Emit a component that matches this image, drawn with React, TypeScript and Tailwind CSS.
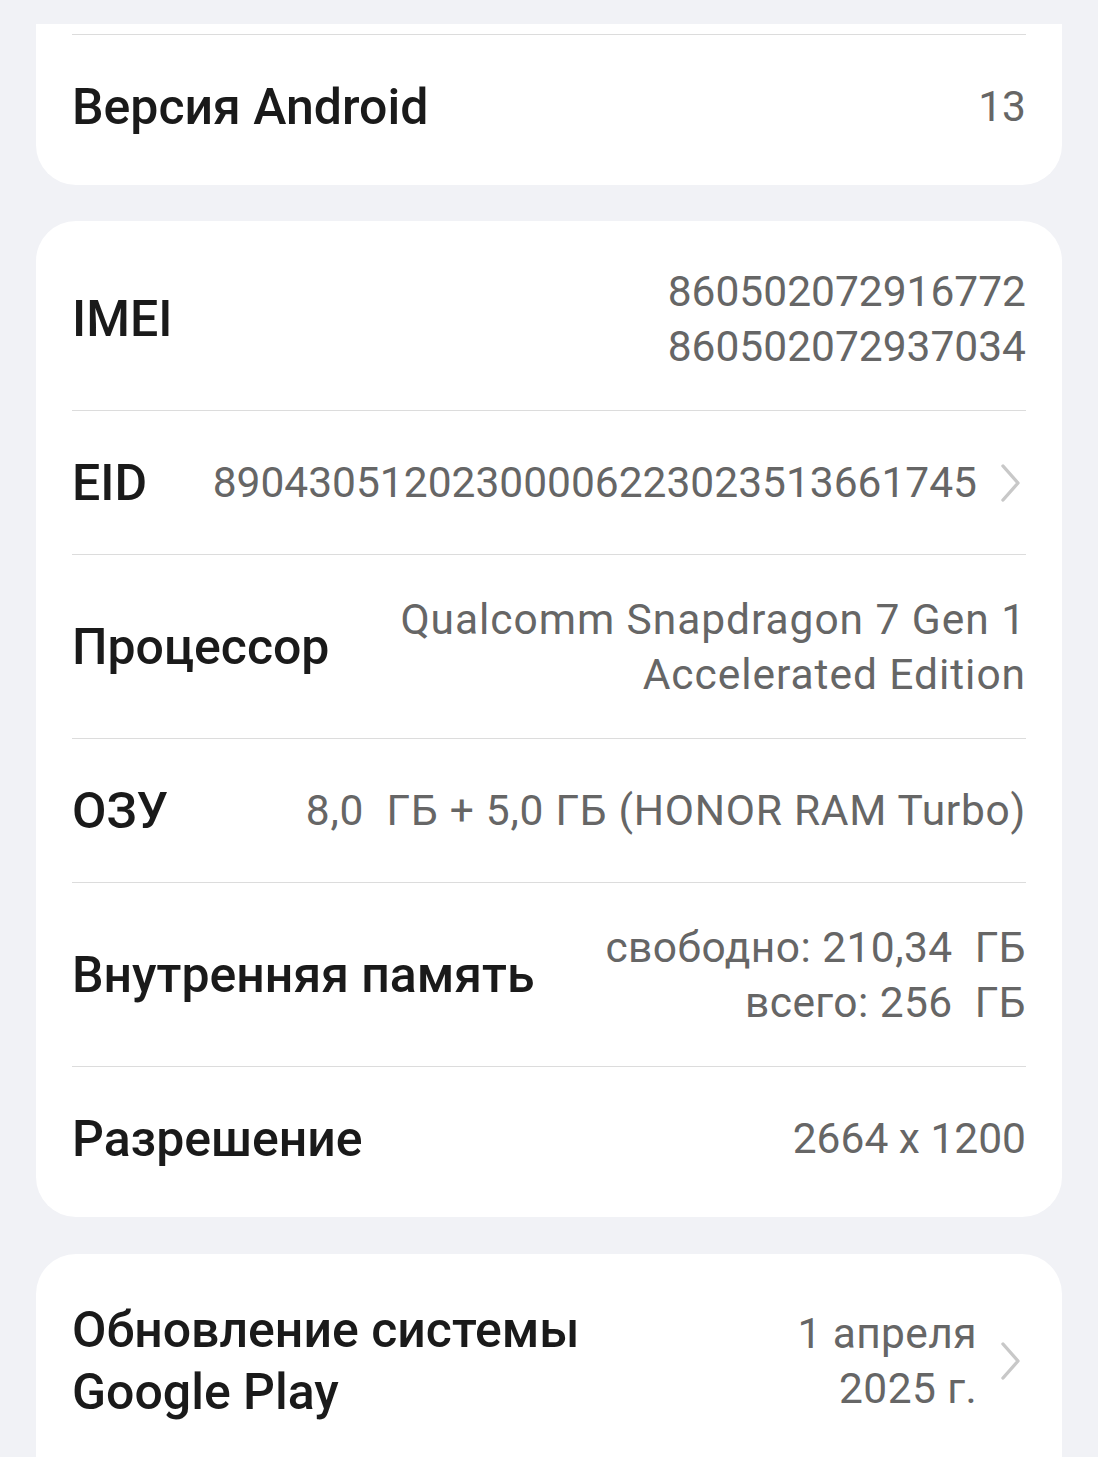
import React from "react";

const Chevron = () => (
  <svg width="26" height="40" viewBox="0 0 26 40" className="shrink-0" fill="none">
    <path d="M3 3 L18 20 L3 37" stroke="#c8c8c8" strokeWidth="3.4" strokeLinecap="round" strokeLinejoin="round" />
  </svg>
);

const Divider = () => <div className="mx-[36px] h-px bg-[#dcdcdc]" />;

type RowProps = {
  label: React.ReactNode;
  values: string[];
  chevron?: boolean;
  valueClass?: string;
};

const Row = ({ label, values, chevron, valueClass }: RowProps) => (
  <div className="flex min-h-[143px] items-center justify-between gap-[30px] px-[36px] py-[36.5px]">
    <div className="shrink-0 font-medium text-[#1a1a1a] text-[50px] leading-[62px]">
      {label}
    </div>
    <div className="flex items-center gap-[23px]">
      <div
        className={
          "flex flex-col items-end text-right text-[42.5px] leading-[55px] text-[#666666] " + (valueClass ?? "")
        }
      >
        {values.map((v, i) => (
          <div key={i} className="whitespace-pre">{v}</div>
        ))}
      </div>
      {chevron && <Chevron />}
    </div>
  </div>
);

export default function App() {
  return (
    <div
      className="min-h-[1457px] w-[1098px] overflow-hidden bg-[#f1f2f6] px-[36px] pt-[24px]"
      style={{ fontFamily: "Roboto, 'Noto Sans', sans-serif" }}
    >
      <div className="rounded-b-[40px] bg-white pb-[7px] pt-[10px]">
        <Divider />
        <Row label="Версия Android" values={["13"]} />
      </div>

      <div className="mt-[36px] rounded-[40px] bg-white pb-[7px] pt-[6px]">
        <Row label="IMEI" values={["860502072916772", "860502072937034"]} />
        <Divider />
        <Row label="EID" values={["89043051202300006223023513661745"]} chevron />
        <Divider />
        <Row
          label="Процессор"
          values={["Qualcomm Snapdragon 7 Gen 1", "Accelerated Edition"]}
          valueClass="tracking-[0.95px]"
        />
        <Divider />
        <Row label="ОЗУ" values={["8,0  ГБ + 5,0 ГБ (HONOR RAM Turbo)"]} valueClass="tracking-[0.72px]" />
        <Divider />
        <Row
          label="Внутренняя память"
          values={["свободно: 210,34  ГБ", "всего: 256  ГБ"]}
          valueClass="tracking-[0.45px]"
        />
        <Divider />
        <Row label="Разрешение" values={["2664 x 1200"]} />
      </div>

      <div className="mt-[37px] rounded-t-[40px] bg-white pt-[8px] pb-[40px]">
        <Row
          label={
            <>
              <div>Обновление системы</div>
              <div>Google Play</div>
            </>
          }
          values={["1 апреля", "2025 г."]}
          chevron
          valueClass="tracking-[0.4px]"
        />
      </div>
    </div>
  );
}
